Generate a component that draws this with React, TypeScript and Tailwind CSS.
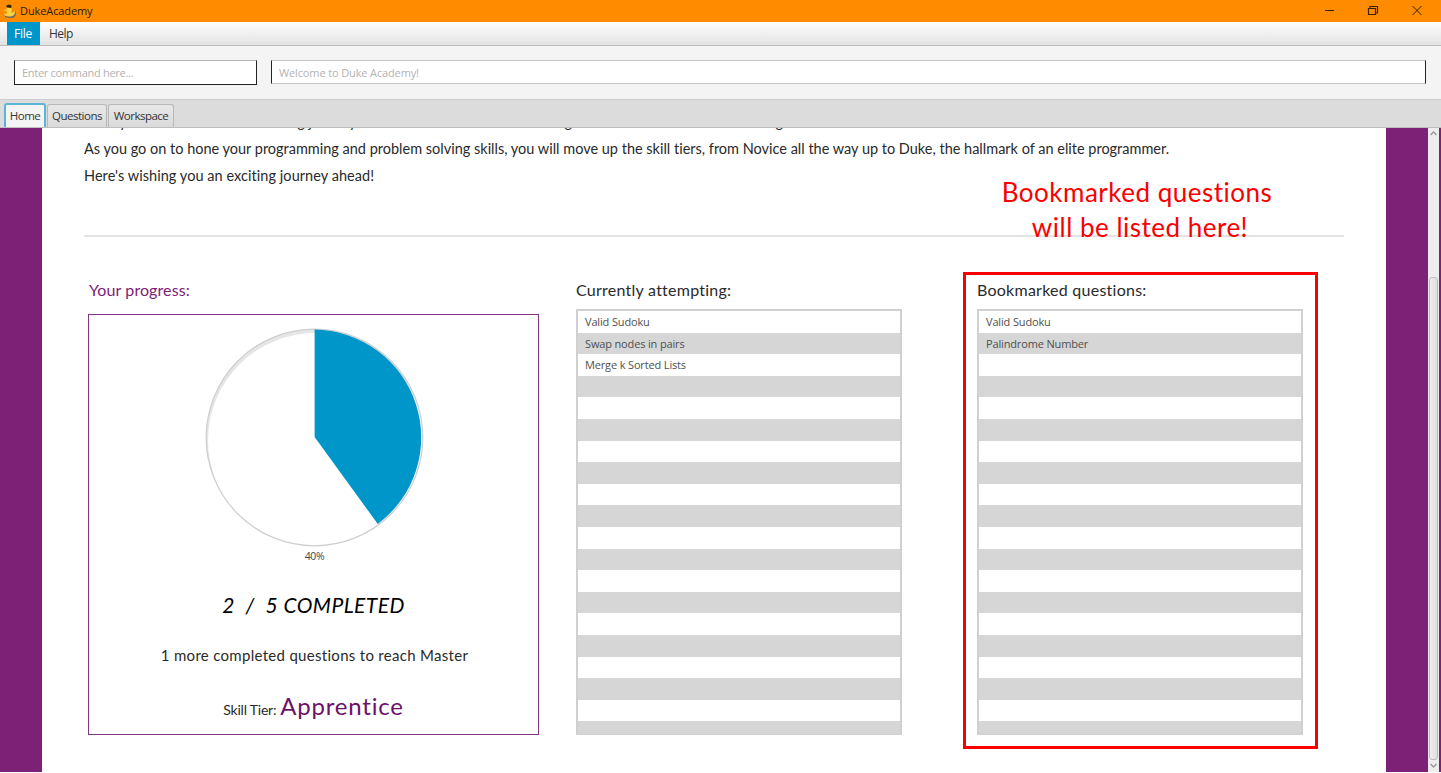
import React from "react";

const attempting = ["Valid Sudoku", "Swap nodes in pairs", "Merge k Sorted Lists"];
const bookmarked = ["Valid Sudoku", "Palindrome Number"];

function DukeIcon() {
  return (
    <svg width="14" height="15" viewBox="0 0 14 15">
      <path d="M1 11 L7 9 L12.8 7.4 Q13.6 11.6 10.8 13.4 Q7 14.6 2.5 13.2 Z" fill="#75695a" />
      <path d="M0.8 10.4 Q2.6 9.6 4.4 9 L7.6 8.6 Q10.4 8.6 12 7.2 Q12.4 10.6 9.6 11.9 Q5 13.2 2 11.8 Z" fill="#f5cf3f" />
      <circle cx="6" cy="5.8" r="2.6" fill="#f7d64a" />
      <path d="M4.4 7.4 H8 L8.6 10.4 H4 Z" fill="#f7d64a" />
      <path d="M3 1.8 L5.8 0.6 L8.6 1.6 L8.2 4 L4.2 3.6 Z" fill="#2f2410" />
      <path d="M0.4 6 L3.8 5.6 L3.8 7.4 Z" fill="#f5cf3f" />
    </svg>
  );
}

function TitleBar() {
  return (
    <div className="flex h-[22px] shrink-0 items-center bg-[#ff8c00] pl-[3px]">
      <DukeIcon />
      <span className="ml-[3px] flex-1 text-[11px] leading-[22px] tracking-[-0.1px] text-[#2b1a00]">DukeAcademy</span>
      <div className="flex items-center pr-1">
        <svg width="112" height="20" viewBox="0 0 112 20" fill="none" stroke="#3a2200" strokeWidth="1">
          <path d="M0 9.5 H9" />
          <path d="M43.5 7.5 H50.5 V13.5 H43.5 Z M45 7 V5.5 H52.5 V12 H51" strokeWidth="1.2" />
          <path d="M87.5 5 L96.5 14 M96.5 5 L87.5 14" />
        </svg>
      </div>
    </div>
  );
}

function MenuBar() {
  return (
    <div className="flex h-6 shrink-0 border-b border-[#bdbdbd] bg-linear-to-b from-white to-[#e2e2e2] pl-[7px] text-[12px] leading-[23px]">
      <span className="h-[23px] w-[33px] bg-[#0096c9] pr-px text-center tracking-[-0.3px] text-white">File</span>
      <span className="pl-[9px] tracking-[-0.5px] text-[#333]">Help</span>
    </div>
  );
}

function CommandBar() {
  return (
    <div className="flex h-[53px] shrink-0 items-start bg-[#f4f4f4] pt-[14px] pl-[14px] text-[11px] text-[#b3b3b3]">
      <div className="h-[25px] w-[243px] border border-[#222] border-t-[#b5b5b5] bg-white pl-[7px] leading-[23px] tracking-[-0.29px]">
        Enter command here...
      </div>
      <div className="ml-[14px] h-6 w-[1155px] border border-x-[#222] border-y-[#c4c4c4] bg-white pl-[7px] leading-[23px] tracking-[-0.13px]">
        Welcome to Duke Academy!
      </div>
    </div>
  );
}

function Tabs() {
  return (
    <div className="flex h-[29px] shrink-0 items-end gap-px border-t border-b border-t-[#cdcdcd] border-b-[#bebebe] bg-[#dcdcdc] pl-1 text-[11.5px] leading-[22px] text-[#333]">
      <div className="h-6 w-[42px] rounded-t-[3px] border-x-2 border-t-2 border-[#5bb5d5] bg-[#f4f4f4] text-center tracking-[-0.5px]">Home</div>
      <div className="h-[23px] w-[60px] rounded-t-[3px] border-x border-t border-[#b8b8b8] bg-linear-to-b from-[#e8e8e8] to-[#dadada] text-center tracking-[-0.5px]">Questions</div>
      <div className="h-[23px] w-[66px] rounded-t-[3px] border-x border-t border-[#b8b8b8] bg-linear-to-b from-[#e8e8e8] to-[#dadada] text-center tracking-[-0.5px]">Workspace</div>
    </div>
  );
}

function QuestionList({ title, items }: { title: string; items: string[] }) {
  return (
    <section className="w-[326px]">
      <h2 className="h-[29px] font-['Lato',sans-serif] text-[16px] leading-[20px] tracking-[0.25px] text-[#2a2a2a]">{title}</h2>
      <div className="h-[426px] overflow-hidden border-x-2 border-t-2 border-b border-[#d0d0d0]">
        {Array.from({ length: 20 }, (_, i) => (
          <div
            key={i}
            className="h-[21.6px] pl-[7px] text-[11px] leading-[22.6px] tracking-[-0.15px] text-[#505050] odd:bg-white even:bg-[#d6d6d6]"
          >
            {items[i]}
          </div>
        ))}
      </div>
    </section>
  );
}

function ProgressCard() {
  return (
    <section className="w-[451px]">
      <h2 className="h-[34px] pl-px font-['Lato',sans-serif] text-[16px] leading-[20px] tracking-[0.1px] text-[#7d2177]">Your progress:</h2>
      <div className="flex h-[421px] flex-col items-center border border-[#833483] pt-[13px] font-['Lato',sans-serif] text-[#2a2a2a]">
        <svg className="ml-px shrink-0" width="220" height="220" viewBox="0 0 220 220">
          <circle cx="110.5" cy="109.5" r="108.5" fill="#e6e6e6" />
          <circle cx="111.5" cy="112.5" r="107.5" fill="#fff" />
          <circle cx="110.5" cy="109.5" r="109" fill="none" stroke="#fff" strokeWidth="1" />
          <circle cx="110.5" cy="109.5" r="108.3" fill="none" stroke="#cfcfcf" strokeWidth="1.3" />
          <path d="M110.6 109 V1.6 A107.9 107.9 0 0 1 173.8 196 Z" fill="#0096c9" />
        </svg>
        <p className="h-[16px] pl-[2px] font-['Open_Sans',sans-serif] text-[10.5px] leading-[16px] tracking-[-0.4px] text-[#444]">40%</p>
        <p className="mt-[27px] h-[28px] text-[21px] leading-[28px] tracking-[0.45px] whitespace-pre text-black italic">2  /  5 COMPLETED</p>
        <p className="mt-[26px] h-[20px] pl-[2px] text-[15px] leading-[20px] tracking-[0.3px]">1 more completed questions to reach Master</p>
        <p className="mt-[25px] flex h-[32px] items-baseline gap-1 text-[14px] leading-[32px] tracking-[-0.2px]">
          Skill Tier: <span className="text-[24px] tracking-[0.8px] text-[#6d1269]">Apprentice</span>
        </p>
      </div>
    </section>
  );
}

function ScrollBar() {
  return (
    <div className="flex w-[11px] flex-col items-center bg-[#ededed]">
      <svg width="11" height="10" viewBox="0 0 11 10" fill="none" stroke="#999" strokeWidth="1.4"><path d="M2.5 7 L5.5 4 L8.5 7" /></svg>
      <div className="mt-[139px] h-[483px] w-[9px] rounded-[3px] border border-[#bcbcbc] bg-linear-to-r from-[#efefef] to-[#dedede]" />
      <svg width="11" height="12" viewBox="0 0 11 12" fill="none" stroke="#999" strokeWidth="1.4"><path d="M2.5 4 L5.5 7 L8.5 4" /></svg>
    </div>
  );
}

export default function App() {
  return (
    <div className="relative flex h-[773px] w-[1441px] flex-col overflow-hidden bg-white font-['Open_Sans',sans-serif] [font-variant-ligatures:none]">
      <TitleBar />
      <MenuBar />
      <CommandBar />
      <Tabs />
      <div className="flex h-[644px] shrink-0 bg-[#7d2177]">
        <main className="ml-[42px] w-[1344px] overflow-hidden bg-white px-[42px]">
          <div className="h-[129px] border-b-2 border-[#e3e3e3] font-['Lato',sans-serif] text-[14.5px] leading-[27px] text-[#2a2a2a]">
            <p className="-mt-[20px] flex whitespace-nowrap">
              <span className="w-[139px] pl-[7px]">Every solution</span>
              <span className="w-[248px]">on a learning journey</span>
              <span className="w-[127px]">is worth sharing</span>
              <span className="pl-[9px]">and worth the time learning.</span>
            </p>
            <p className="tracking-[-0.005px] whitespace-nowrap">
              As you go on to hone your programming and problem solving skills, you will move up the skill tiers, from Novice all the way up to Duke, the hallmark of an elite programmer.
            </p>
            <p className="tracking-[0.05px]">Here's wishing you an exciting journey ahead!</p>
          </div>
          <div className="flex pt-[43px] pl-[4px]">
            <ProgressCard />
            <div className="ml-[37px]"><QuestionList title="Currently attempting:" items={attempting} /></div>
            <div className="ml-[75px]"><QuestionList title="Bookmarked questions:" items={bookmarked} /></div>
          </div>
        </main>
        <div className="ml-[42px] flex"><ScrollBar /></div>
      </div>
      <div className="absolute top-[272px] left-[963px] h-[477px] w-[355px] border-3 border-[#fb0000]" />
      <div className="absolute top-[175px] left-[986px] w-[302px] text-center font-['Lato',sans-serif] text-[26px] leading-[35px] tracking-[0.5px] text-[#fb0000]">
        <p>Bookmarked questions</p>
        <p className="pl-[6px]">will be listed here!</p>
      </div>
    </div>
  );
}
